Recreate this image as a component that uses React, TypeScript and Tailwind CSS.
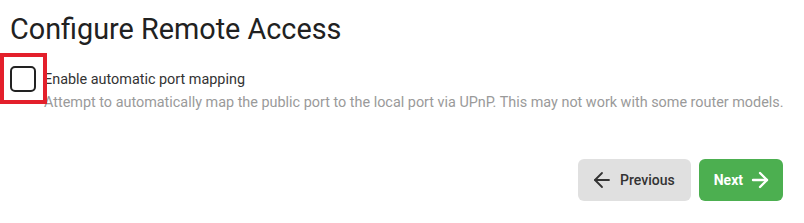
import { ArrowLeft, ArrowRight } from 'lucide-react'

export default function App() {
  return (
    <div className="w-[804px] h-[223px] bg-white pl-[10px] pr-[21px] pt-[12px] font-['Roboto',sans-serif]">
      <h1 className="text-[28.8px] leading-[34px] font-normal text-[#212121]">Configure Remote Access</h1>

      <div className="mt-[20px] flex items-start gap-[8px]">
        <div className="relative shrink-0">
          <div className="w-[26px] h-[26px] rounded-[5px] border-2 border-[#222] bg-white" />
          <div className="absolute left-[-10px] top-[-13px] w-[47px] h-[51px] border-4 border-[#e3202b] pointer-events-none" />
        </div>
        <div className="pt-[4px]">
          <div className="text-[14.4px] leading-[20px] text-[#333]">Enable automatic port mapping</div>
          <div className="mt-[3px] text-[14.4px] leading-[20px] text-[#9a9a9a] whitespace-nowrap">
            Attempt to automatically map the public port to the local port via UPnP. This may not work with some router models.
          </div>
        </div>
      </div>

      <div className="mt-[46px] flex justify-end gap-[8px]">
        <button className="h-[42px] flex items-center gap-[6px] pl-[12px] pr-[16px] rounded-[6px] bg-[#e0e0e0] text-[#333] text-[14px] font-medium">
          <ArrowLeft size={24} strokeWidth={1.8} />
          Previous
        </button>
        <button className="h-[42px] flex items-center gap-[5px] pl-[15px] pr-[11px] rounded-[6px] bg-[#4caf50] text-white text-[14px] font-bold">
          Next
          <ArrowRight size={24} strokeWidth={2.4} />
        </button>
      </div>
    </div>
  )
}
